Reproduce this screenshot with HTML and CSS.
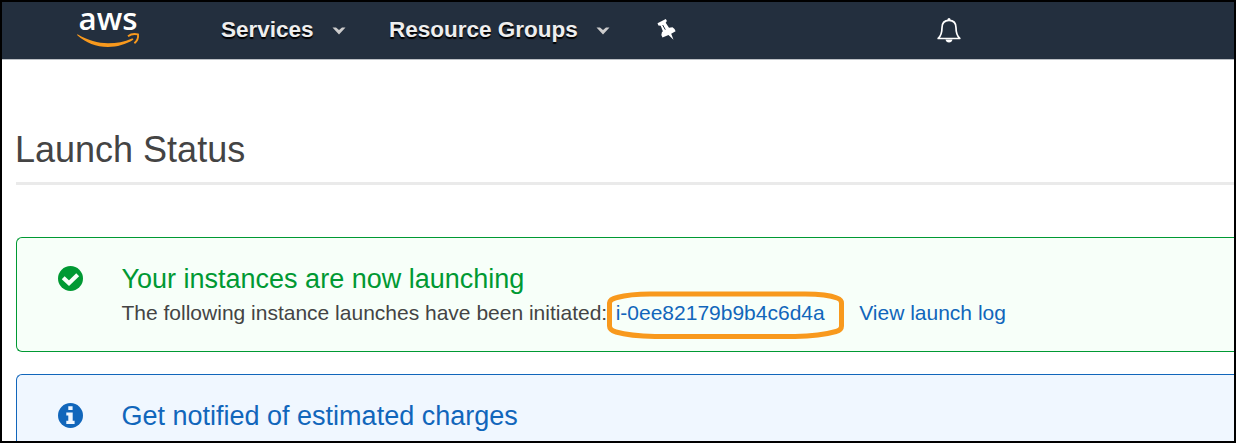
FILE: index.html
```html
<!DOCTYPE html>
<html lang="en">
<head>
<meta charset="utf-8">
<title>Launch Status</title>
<link rel="stylesheet" href="styles.css">
</head>
<body>
<div class="frame">
  <header class="nav">
    <svg class="logo" width="64" height="48" viewBox="0 0 64 48" role="img" aria-label="aws">
      <text class="logo-text" x="1.500" y="27.700" textLength="59" lengthAdjust="spacingAndGlyphs">aws</text>
      <path d="M0.500 32.300C11 38.500 21 41.300 31 41.300C40 41.300 47 39.800 55 36.500Q56.800 36.300 56.200 37.800C49 42.500 40 45 31 45C19 45 9 41 0.300 33.300Q0 32.300 0.500 32.300Z" fill="#f8991d"/>
      <path d="M51 34.200C54 31.900 58 31.600 61 32.400C61.400 35.500 60.200 39 57.400 41.300" fill="none" stroke="#f8991d" stroke-width="1.900"/>
    </svg>
    <nav class="menu">
      <a class="menu-item services">Services
        <svg class="caret" width="14" height="8" viewBox="0 0 14 8"><path d="M0.500 0.500H4L7 3L10 0.500H13.500L7 7.500Z"/></svg></a>
      <a class="menu-item groups">Resource Groups
        <svg class="caret" width="14" height="8" viewBox="0 0 14 8"><path d="M0.500 0.500H4L7 3L10 0.500H13.500L7 7.500Z"/></svg></a>
    </nav>
    <svg class="pin" width="20" height="22" viewBox="0 0 20 22">
      <path fill="#fff" d="M0.500 4.200L8.800 0L9.900 2.100L8.700 3.800L12 8.700L15.500 8.200Q18 9.600 18.600 12.200L14.200 14.800L16.500 20.800L11.500 16L5.500 18.500Q3.600 15.600 4.900 13.200L5.900 12.200L3.700 6.700L1.400 6.400Z"/>
      <path stroke="#232f3e" stroke-width="1" fill="none" d="M5.700 6L8.300 10.700"/>
    </svg>
    <svg class="bell" width="26" height="28" viewBox="0 0 26 28">
      <path d="M2.200 21.500C5.500 18.500 6 15.500 6 10.800C6 6 8.800 3.400 13 3.400S20 6 20 10.800C20 15.500 20.500 18.500 23.800 21.500Z" fill="none" stroke="#fff" stroke-width="1.700" stroke-linejoin="round"/>
      <circle cx="13" cy="2.500" r="1.500" fill="#fff"/>
      <path d="M9.500 22.500A3.600 3.900 0 0 0 16.500 22.500Z" fill="#fff"/>
    </svg>
  </header>
  <main class="content">
    <h1 class="heading">Launch Status</h1>
    <section class="alert success">
      <svg class="alert-icon" width="25" height="25" viewBox="0 0 25 25">
        <circle cx="12.500" cy="12.500" r="12.500" fill="#093"/>
        <path d="M5.200 11.700L11 17.200L19.700 8.800" fill="none" stroke="#f7fff9" stroke-width="4.200"/>
      </svg>
      <div class="alert-body">
        <h2 class="alert-title">Your instances are now launching</h2>
        <p class="alert-text"><span>The following instance launches have been initiated:</span>
          <span class="instance"><a class="link">i-0ee82179b9b4c6d4a</a>
            <svg class="marker" width="240" height="50" viewBox="0 0 240 50"><path d="M4.500 13Q5 9 12 7.500Q25 4 45 4H200Q222 4 232 8Q236.500 9.500 236.500 13V36Q236.500 40 231 41.500Q215 46 190 46.500H50Q25 46 11 42Q4.500 40 4.500 36Z"/></svg>
          </span>
          <a class="link log">View launch log</a></p>
      </div>
    </section>
    <section class="alert info">
      <svg class="alert-icon" width="25" height="25" viewBox="0 0 25 25">
        <circle cx="12.500" cy="12.500" r="12.500" fill="#1166bb"/>
        <path d="M10.300 3.200H14.600V7H10.300ZM8.300 9.500H14.700V17.700H16.600V21H8.300V17.700H10.300V12.500H8.300Z" fill="#f0f7ff"/>
      </svg>
      <div class="alert-body">
        <h2 class="alert-title">Get notified of estimated charges</h2>
      </div>
    </section>
  </main>
</div>
</body>
</html>
```
FILE: styles.css
```css
* { box-sizing: border-box; }
body { margin: 0; font-family: "Liberation Sans", Arial, sans-serif; color: #444; }
.frame { width: 1236px; height: 443px; border: 2px solid #000; background: #fff; overflow: hidden; }
.nav { height: 58px; background: #232f3e; border-bottom: 1px solid #bcc0c5; display: flex; align-items: flex-start; }
.logo { margin: 0 0 0 75px; flex: none; overflow: visible; }
.logo-text { font-family: "Open Sans", "Noto Sans", sans-serif; font-size: 31.5px; font-weight: 550; fill: #fff; }
.menu { display: flex; margin-left: 80px; padding-top: 14px; }
.menu-item { display: flex; align-items: center; gap: 18px; height: 27px; font-size: 22.5px; font-weight: bold; line-height: 27px; color: #eee; text-shadow: 0 2px 1px #000; white-space: nowrap; }
.services { width: 168px; }
.groups { width: 222px; }
.caret { fill: #ccc; margin-top: 3px; flex: none; }
.pin { margin: 17px 0 0 46px; }
.bell { margin: 14.5px 0 0 259px; }
.content { padding: 69px 0 0 14px; }
.heading { margin: 0 0 52px; height: 56px; border-bottom: 3px solid #eaeaea; font-size: 36px; line-height: 42px; font-weight: normal; text-indent: -1px; }
.alert { display: flex; border: 1px solid; border-right: 0; border-radius: 6px 0 0 6px; padding: 24px 0 0 41px; }
.alert-icon { margin-top: 4px; flex: none; }
.alert-body { margin-left: 38.5px; }
.success { height: 115px; margin-bottom: 22px; border-color: #093; background: #f7fff9; }
.success .alert-title { color: #093; }
.info { height: 110px; border-color: #1166bb; background: #f0f7ff; }
.info .alert-title { color: #1166bb; }
.alert-title { margin: 0; font-size: 27px; line-height: 34px; font-weight: normal; white-space: nowrap; }
.alert-text { margin: 4px 0 0; display: flex; font-size: 21px; line-height: 26px; white-space: nowrap; }
.link { color: #1166bb; }
.instance { position: relative; margin-left: 8.5px; }
.marker { position: absolute; left: -11px; top: -10px; fill: none; stroke: #f8991d; stroke-width: 5; }
.log { margin-left: 34.5px; }
```
